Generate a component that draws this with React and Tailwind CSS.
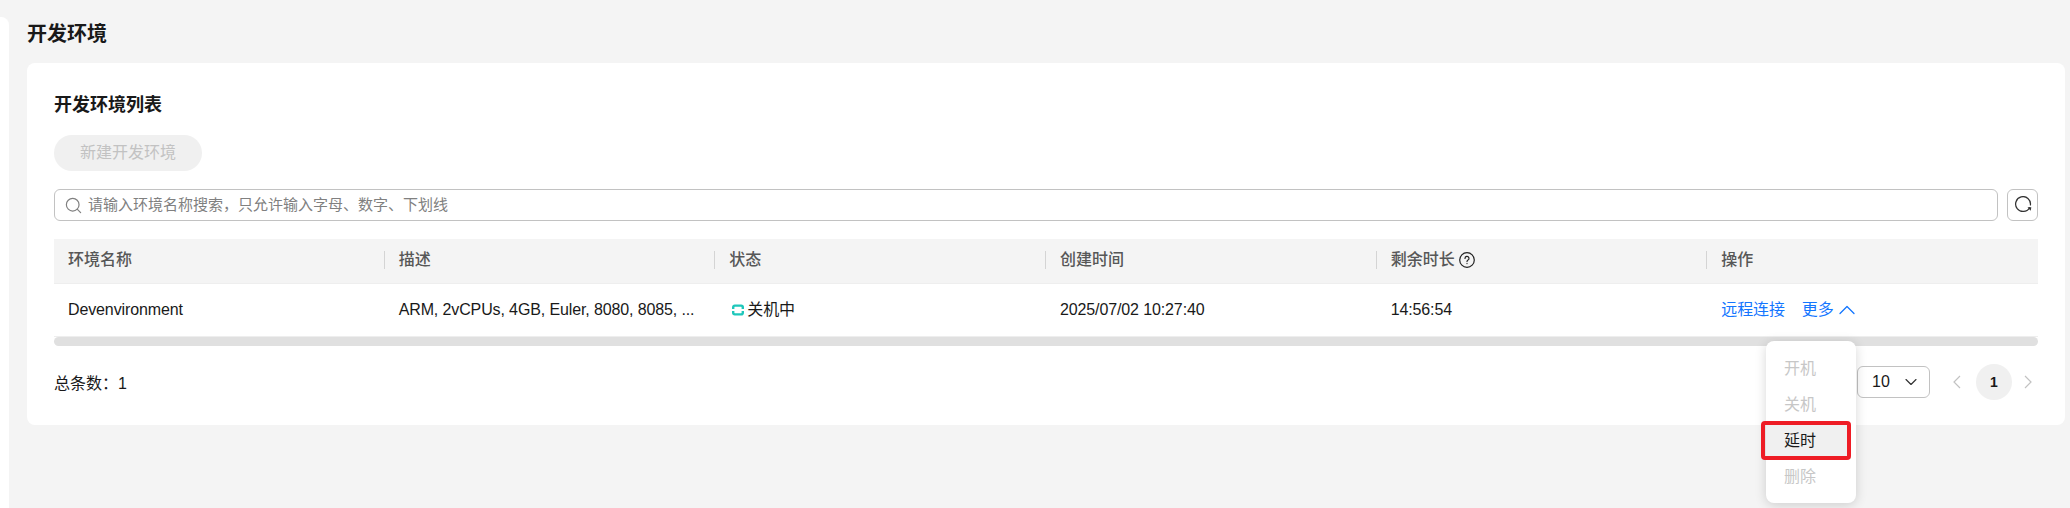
import { ChevronDown, ChevronUp, Search } from "lucide-react";

const columns = ["环境名称", "描述", "状态", "创建时间", "剩余时长", "操作"];

const menuItems = [
  { label: "开机", disabled: true },
  { label: "关机", disabled: true },
  { label: "延时", disabled: false },
  { label: "删除", disabled: true },
];

const RefreshIcon = () => (
  <svg viewBox="0 0 16 16" className="w-[18px] h-[18px] text-[#333]" fill="none" stroke="currentColor" strokeWidth="1.1">
    <path d="M13.8 10.4A6.6 6.6 0 1 1 14.6 8" strokeLinecap="round" />
    <path d="M12 10h3.4l-.6 3.2z" fill="currentColor" stroke="none" />
  </svg>
);

const StatusIcon = () => (
  <svg viewBox="0 0 12 12" className="w-3 h-3 shrink-0" fill="none" stroke="#1fc7bb" strokeWidth="2.4">
    <path d="M1.2 5V3.2q0-1.6 1.6-1.6h6.4q1.6 0 1.6 1.6V5" />
    <path d="M10.8 7v1.8q0 1.6-1.6 1.6H2.8q-1.6 0-1.6-1.6V7" />
  </svg>
);

const HelpIcon = () => (
  <svg viewBox="0 0 16 16" className="w-4 h-4 text-[#222]" fill="none" stroke="currentColor" strokeWidth="1.2">
    <circle cx="8" cy="8" r="7.3" />
    <path d="M6 6.4a2 2 0 1 1 3 1.7c-.7.4-1 .8-1 1.5" strokeLinecap="round" />
    <circle cx="8" cy="11.6" r=".7" fill="currentColor" stroke="none" />
  </svg>
);

const PagerArrow = ({ d }) => (
  <svg viewBox="0 0 9 14" className="w-[9px] h-[14px] text-[#c2c2c2]" fill="none" stroke="currentColor" strokeWidth="1.2">
    <path d={d} />
  </svg>
);

const App = () => {
  return (
    <div className="flex h-[508px] w-[2070px] overflow-hidden bg-[#f4f4f4] font-['Liberation_Sans','Noto_Sans_CJK_SC',sans-serif] text-base text-[#191919]">
      <div className="w-[9px] mt-[17px] bg-white rounded-tr-lg" />

      <main className="flex-1 pl-[18px] pr-[5px] pt-[20px]">
        <h1 className="text-xl leading-7 font-bold mb-[15px]">开发环境</h1>

        <section className="relative h-[362px] bg-white rounded-lg px-[27px] pt-[29px]">
          <h2 className="text-lg leading-[26px] font-bold">开发环境列表</h2>

          <button className="mt-[17px] h-9 w-[148px] rounded-full bg-[#f0f0f0] text-[#c2c2c2]">
            新建开发环境
          </button>

          <div className="mt-[18px] flex gap-[9px]">
            <div className="flex-1 h-8 flex items-center gap-[5px] px-[9px] border border-[#c2c2c2] rounded-md">
              <Search className="w-[19px] h-[19px] text-[#808080] shrink-0" strokeWidth={1.5} />
              <span className="text-[#808080] text-[15px]">请输入环境名称搜索，只允许输入字母、数字、下划线</span>
            </div>
            <button className="w-[31px] h-8 flex items-center justify-center border border-[#c2c2c2] rounded-md">
              <RefreshIcon />
            </button>
          </div>

          <div className="mt-[18px]">
            <div className="grid grid-cols-6 h-[45px] pb-[2px] bg-[#f4f4f4] border-b border-[#eeeeee] items-center text-[#575757] font-medium">
              {columns.map((col) => (
                <div key={col} className="flex items-center h-[18px] pl-[14px] first:border-l-0 border-l border-[#d4d4d4] -ml-px first:ml-0">
                  <span>{col}</span>
                  {col === "剩余时长" && <span className="ml-[4px]"><HelpIcon /></span>}
                </div>
              ))}
            </div>

            <div className="grid grid-cols-6 h-[53px] items-center border-b border-[#eeeeee] tracking-[-0.12px]">
              <div className="pl-[14px]">Devenvironment</div>
              <div className="pl-[14px]">ARM, 2vCPUs, 4GB, Euler, 8080, 8085, ...</div>
              <div className="pl-[17px] flex items-center gap-[3px]">
                <StatusIcon />
                <span>关机中</span>
              </div>
              <div className="pl-[14px]">2025/07/02 10:27:40</div>
              <div className="pl-[14px]">14:56:54</div>
              <div className="pl-[14px] flex items-center text-[#1476ff]">
                <span>远程连接</span>
                <span className="ml-[17px]">更多</span>
                <ChevronUp className="-ml-px w-7 h-7 shrink-0" strokeWidth={1.1} />
              </div>
            </div>

            <div className="h-[9px] rounded-full bg-[#e0e0e0]" />
          </div>

          <div className="mt-[18px] flex items-center justify-between h-9">
            <span className="mt-[3px]">总条数：1</span>
            <div className="flex items-center">
              <div className="w-[73px] h-8 flex items-center justify-between pl-[14px] pr-[8px] border border-[#c2c2c2] rounded-md">
                <span>10</span>
                <ChevronDown className="w-5 h-5 text-[#333]" strokeWidth={1.4} />
              </div>
              <span className="ml-[22px]"><PagerArrow d="M8 1 2 7l6 6" /></span>
              <span className="ml-[15px] w-9 h-9 flex items-center justify-center rounded-full bg-[#f0f0f0] text-sm font-bold">1</span>
              <span className="ml-[12px] mr-[5px]"><PagerArrow d="m1 1 6 6-6 6" /></span>
            </div>
          </div>

          {/* dropdown for 更多, hangs past the card bottom */}
          <div className="absolute left-[1739px] top-[278px] w-[90px] h-[162px] pt-[10px] bg-white rounded-lg shadow-[0_2px_12px_rgba(0,0,0,0.16)]">
            {menuItems.map((item) => (
              <div
                key={item.label}
                className={`h-9 flex items-center pl-[18px] ${item.disabled ? "text-[#c7c7c7]" : "mr-[5px] bg-[#f0f0f0] text-[#191919]"}`}
              >
                {item.label}
              </div>
            ))}
          </div>

          {/* red annotation box around 延时 */}
          <div className="absolute left-[1734px] top-[358px] w-[90px] h-[39px] border-4 border-[#ee1c25] rounded-sm" />
        </section>
      </main>
    </div>
  );
};

export default App;
